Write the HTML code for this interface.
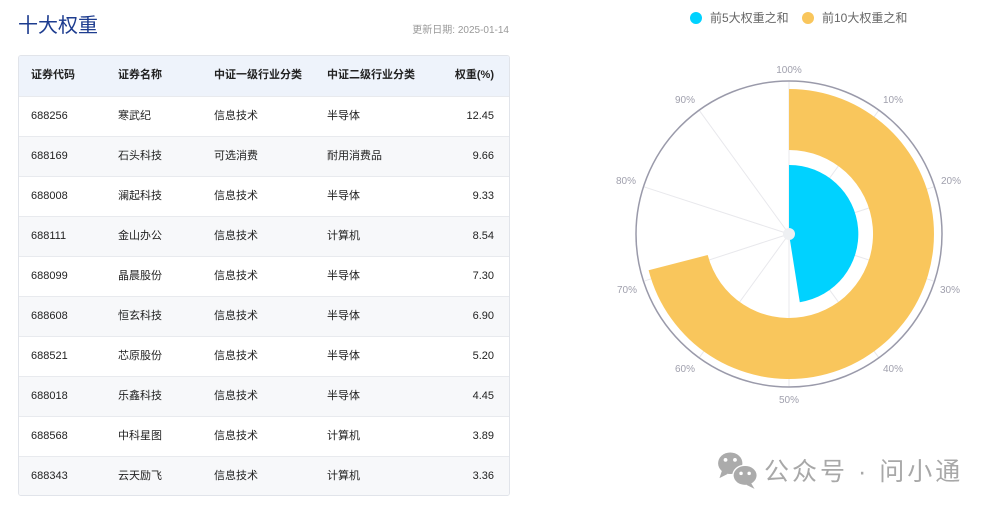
<!DOCTYPE html>
<html><head><meta charset="utf-8"><style>
*{margin:0;padding:0;box-sizing:border-box}
body{width:993px;height:510px;background:#fff;position:relative;overflow:hidden;font-family:"Liberation Sans","Noto Sans CJK SC",sans-serif;color:#222}
.title{position:absolute;left:18px;top:9px;font-size:20px;color:#1d3c8f;letter-spacing:0px}
.date{position:absolute;right:484px;top:21px;font-size:10px;color:#999}
.tbl{position:absolute;left:18px;top:55px;width:492px;height:441px;border:1px solid #e1e4ea;border-radius:3px;overflow:hidden}
.row{height:40px;position:relative;border-top:1px solid #e8eaee;font-size:11px;line-height:39px}
.row:first-child{border-top:none;background:#eef3fb;font-weight:bold;height:40px}
.row:nth-child(odd):not(:first-child){background:#f7f8fa}
.row span{position:absolute;top:0}
.c1{left:12px}.c2{left:99px}.c3{left:195px}.c4{left:308px}.c5{right:15px}
.wm{position:absolute;left:764px;top:452px;font-size:25px;color:#a8a8a8;letter-spacing:3px;white-space:nowrap}
</style></head><body>
<div class="title">十大权重</div>
<div class="date">更新日期: 2025-01-14</div>
<div class="tbl">
<div class="row"><span class="c1">证券代码</span><span class="c2">证券名称</span><span class="c3">中证一级行业分类</span><span class="c4">中证二级行业分类</span><span class="c5">权重(%)</span></div>
<div class="row"><span class="c1">688256</span><span class="c2">寒武纪</span><span class="c3">信息技术</span><span class="c4">半导体</span><span class="c5">12.45</span></div>
<div class="row"><span class="c1">688169</span><span class="c2">石头科技</span><span class="c3">可选消费</span><span class="c4">耐用消费品</span><span class="c5">9.66</span></div>
<div class="row"><span class="c1">688008</span><span class="c2">澜起科技</span><span class="c3">信息技术</span><span class="c4">半导体</span><span class="c5">9.33</span></div>
<div class="row"><span class="c1">688111</span><span class="c2">金山办公</span><span class="c3">信息技术</span><span class="c4">计算机</span><span class="c5">8.54</span></div>
<div class="row"><span class="c1">688099</span><span class="c2">晶晨股份</span><span class="c3">信息技术</span><span class="c4">半导体</span><span class="c5">7.30</span></div>
<div class="row"><span class="c1">688608</span><span class="c2">恒玄科技</span><span class="c3">信息技术</span><span class="c4">半导体</span><span class="c5">6.90</span></div>
<div class="row"><span class="c1">688521</span><span class="c2">芯原股份</span><span class="c3">信息技术</span><span class="c4">半导体</span><span class="c5">5.20</span></div>
<div class="row"><span class="c1">688018</span><span class="c2">乐鑫科技</span><span class="c3">信息技术</span><span class="c4">半导体</span><span class="c5">4.45</span></div>
<div class="row"><span class="c1">688568</span><span class="c2">中科星图</span><span class="c3">信息技术</span><span class="c4">计算机</span><span class="c5">3.89</span></div>
<div class="row"><span class="c1">688343</span><span class="c2">云天励飞</span><span class="c3">信息技术</span><span class="c4">计算机</span><span class="c5">3.36</span></div>
</div>
<svg style="position:absolute;left:0;top:0" width="993" height="510" font-family="Liberation Sans, Noto Sans CJK SC, sans-serif">
<circle cx="696" cy="18" r="6" fill="#00d2ff"/>
<text x="710" y="22" font-size="12" fill="#666">前5大权重之和</text>
<circle cx="808" cy="18" r="6" fill="#f9c65c"/>
<text x="822" y="22" font-size="12" fill="#666">前10大权重之和</text>
<g stroke="#e8e8ec" stroke-width="1">
<line x1="789" y1="234" x2="789" y2="81"/>
<line x1="789" y1="234" x2="878.9" y2="110.2"/>
<line x1="789" y1="234" x2="934.5" y2="186.7"/>
<line x1="789" y1="234" x2="934.5" y2="281.3"/>
<line x1="789" y1="234" x2="878.9" y2="357.8"/>
<line x1="789" y1="234" x2="789" y2="387"/>
<line x1="789" y1="234" x2="699.1" y2="357.8"/>
<line x1="789" y1="234" x2="643.5" y2="281.3"/>
<line x1="789" y1="234" x2="643.5" y2="186.7"/>
<line x1="789" y1="234" x2="699.1" y2="110.2"/>
</g>
<path d="M789,89 A145,145 0 1 1 648.6,270.3 L707.7,255.0 A84,84 0 1 0 789,150 Z" fill="#f9c65c"/>
<path d="M789,234 L789,165 A69,69 0 0 1 799.8,302.2 Z" fill="#00d2ff"/>
<circle cx="789" cy="234" r="6" fill="#eef0f3"/>
<circle cx="789" cy="234" r="153" fill="none" stroke="#9a9aaa" stroke-width="1.5"/>
<g font-size="10" fill="#a0a0ad" text-anchor="middle">
<text x="789" y="73">100%</text>
<text x="893" y="103">10%</text>
<text x="951" y="184">20%</text>
<text x="950" y="293">30%</text>
<text x="893" y="372">40%</text>
<text x="789" y="403">50%</text>
<text x="685" y="372">60%</text>
<text x="627" y="293">70%</text>
<text x="626" y="184">80%</text>
<text x="685" y="103">90%</text>
</g>
<g transform="translate(737,470) scale(1.35) translate(-740,-468)">
<g fill="#ababab">
<ellipse cx="735" cy="463" rx="9" ry="8"/>
<path d="M729,468 l-2,6 l6,-3z"/>
<ellipse cx="746" cy="472" rx="9.5" ry="8" fill="#fff"/>
<ellipse cx="746" cy="472" rx="8.5" ry="7"/>
<path d="M750,477 l3,5 l-6,-3z"/>
</g>
<g fill="#fff"><circle cx="731.5" cy="460.5" r="1.4"/><circle cx="738.5" cy="460.5" r="1.4"/><circle cx="743" cy="470.5" r="1.3"/><circle cx="749" cy="470.5" r="1.3"/></g>
</g>
</svg>
<div class="wm">公众号 · 问小通</div>
</body></html>
